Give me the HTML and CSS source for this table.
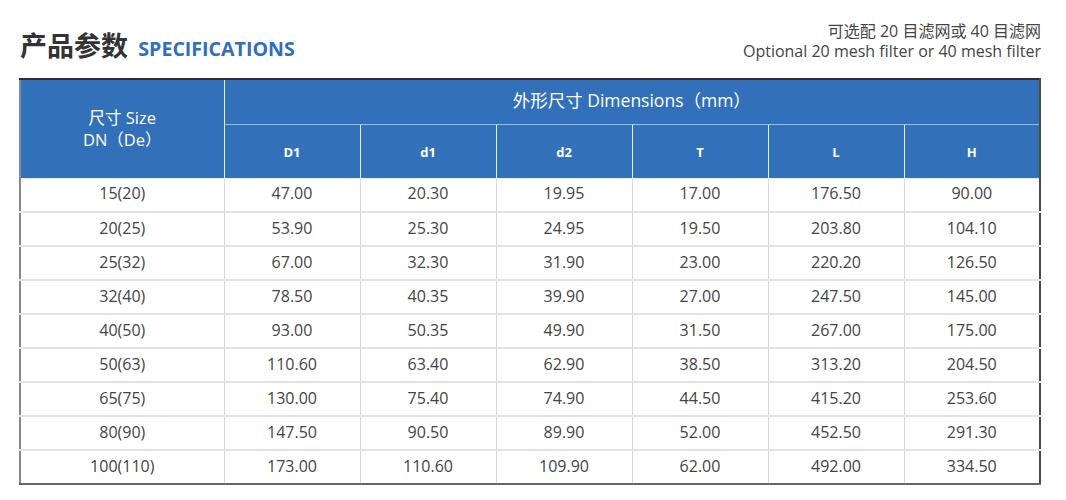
FILE: index.html
```html
<!DOCTYPE html>
<html lang="zh">
<head>
<meta charset="utf-8">
<link rel="stylesheet" href="styles.css">
</head>
<body>
<div class="page">
  <div class="top">
    <h1 class="title"><span class="cn">产品参数</span> <span class="en">SPECIFICATIONS</span></h1>
    <div class="note">
      <div>可选配 20 目滤网或 40 目滤网</div>
      <div>Optional 20 mesh filter or 40 mesh filter</div>
    </div>
  </div>
  <table class="spec">
    <colgroup>
      <col class="c0"><col class="cn1"><col class="cn1"><col class="cn1"><col class="cn1"><col class="cn1"><col class="cn1">
    </colgroup>
    <thead>
      <tr class="h1">
        <th rowspan="2" class="size">尺寸 Size<br>DN（De）</th>
        <th colspan="6" class="dim">外形尺寸 Dimensions（mm）</th>
      </tr>
      <tr class="h2">
        <th>D1</th><th>d1</th><th>d2</th><th>T</th><th>L</th><th>H</th>
      </tr>
    </thead>
    <tbody>
      <tr><td>15(20)</td><td>47.00</td><td>20.30</td><td>19.95</td><td>17.00</td><td>176.50</td><td>90.00</td></tr>
      <tr><td>20(25)</td><td>53.90</td><td>25.30</td><td>24.95</td><td>19.50</td><td>203.80</td><td>104.10</td></tr>
      <tr><td>25(32)</td><td>67.00</td><td>32.30</td><td>31.90</td><td>23.00</td><td>220.20</td><td>126.50</td></tr>
      <tr><td>32(40)</td><td>78.50</td><td>40.35</td><td>39.90</td><td>27.00</td><td>247.50</td><td>145.00</td></tr>
      <tr><td>40(50)</td><td>93.00</td><td>50.35</td><td>49.90</td><td>31.50</td><td>267.00</td><td>175.00</td></tr>
      <tr><td>50(63)</td><td>110.60</td><td>63.40</td><td>62.90</td><td>38.50</td><td>313.20</td><td>204.50</td></tr>
      <tr><td>65(75)</td><td>130.00</td><td>75.40</td><td>74.90</td><td>44.50</td><td>415.20</td><td>253.60</td></tr>
      <tr><td>80(90)</td><td>147.50</td><td>90.50</td><td>89.90</td><td>52.00</td><td>452.50</td><td>291.30</td></tr>
      <tr><td>100(110)</td><td>173.00</td><td>110.60</td><td>109.90</td><td>62.00</td><td>492.00</td><td>334.50</td></tr>
    </tbody>
  </table>
</div>
</body>
</html>
```
FILE: styles.css
```css
* { box-sizing: border-box; }
body {
  margin: 0;
  background: #fff;
  font-family: "Open Sans", "Noto Sans", "Noto Sans CJK SC", sans-serif;
  color: #444;
}
.page {
  padding: 19px 25px 0 19px;
  width: 1066px;
}
.top {
  display: flex;
  justify-content: space-between;
  align-items: flex-start;
  height: 59px;
}
.title {
  margin: 10px 0 0 1px;
  font-weight: 700;
  line-height: 30px;
  white-space: nowrap;
}
.title .cn {
  font-family: "Noto Sans CJK SC", sans-serif;
  font-size: 27px;
  color: #333;
}
.title .en {
  font-family: "Open Sans", sans-serif;
  font-size: 19.6px;
  color: #2f6fbb;
  margin-left: 2px;
}
.note {
  text-align: right;
  font-size: 16px;
  line-height: 20px;
  color: #444;
  padding-top: 2px;
  font-family: "Open Sans", "Noto Sans CJK SC", sans-serif;
}
.spec {
  border-collapse: collapse;
  width: 1022px;
  table-layout: fixed;
  border-top: 2px solid #2b2f36;
  border-right: 2px solid #4a4a4a;
  border-bottom: 2px solid #666;
  border-left: 2px solid #888;
}
.c0 { width: 204px; }
.cn1 { width: 136px; }
.spec th {
  background: #3271ba;
  color: #fff;
  font-weight: 400;
  border: 1px solid #e6eef8;
  text-align: center;
  padding: 0;
}
.spec .h1 th { height: 45px; }
.spec .h2 th { height: 54px; font-weight: 700; font-size: 13px; padding-top: 1px; }
.spec .size {
  font-size: 16.5px;
  line-height: 22px;
  padding-bottom: 0;
  font-family: "Open Sans", "Noto Sans CJK SC", sans-serif;
}
.spec .dim {
  font-size: 17.5px;
  font-family: "Open Sans", "Noto Sans CJK SC", sans-serif;
  border-bottom-color: #9dbde2;
  padding-bottom: 4px;
}
.spec td {
  height: 34px;
  text-align: center;
  font-size: 16px;
  color: #444;
  border: 1px solid #d6d6d6;
  border-top: 2px solid #e2e2e2;
  padding: 0 0 3px;
}
.spec tbody tr:first-child td { border-top: none; }
```
